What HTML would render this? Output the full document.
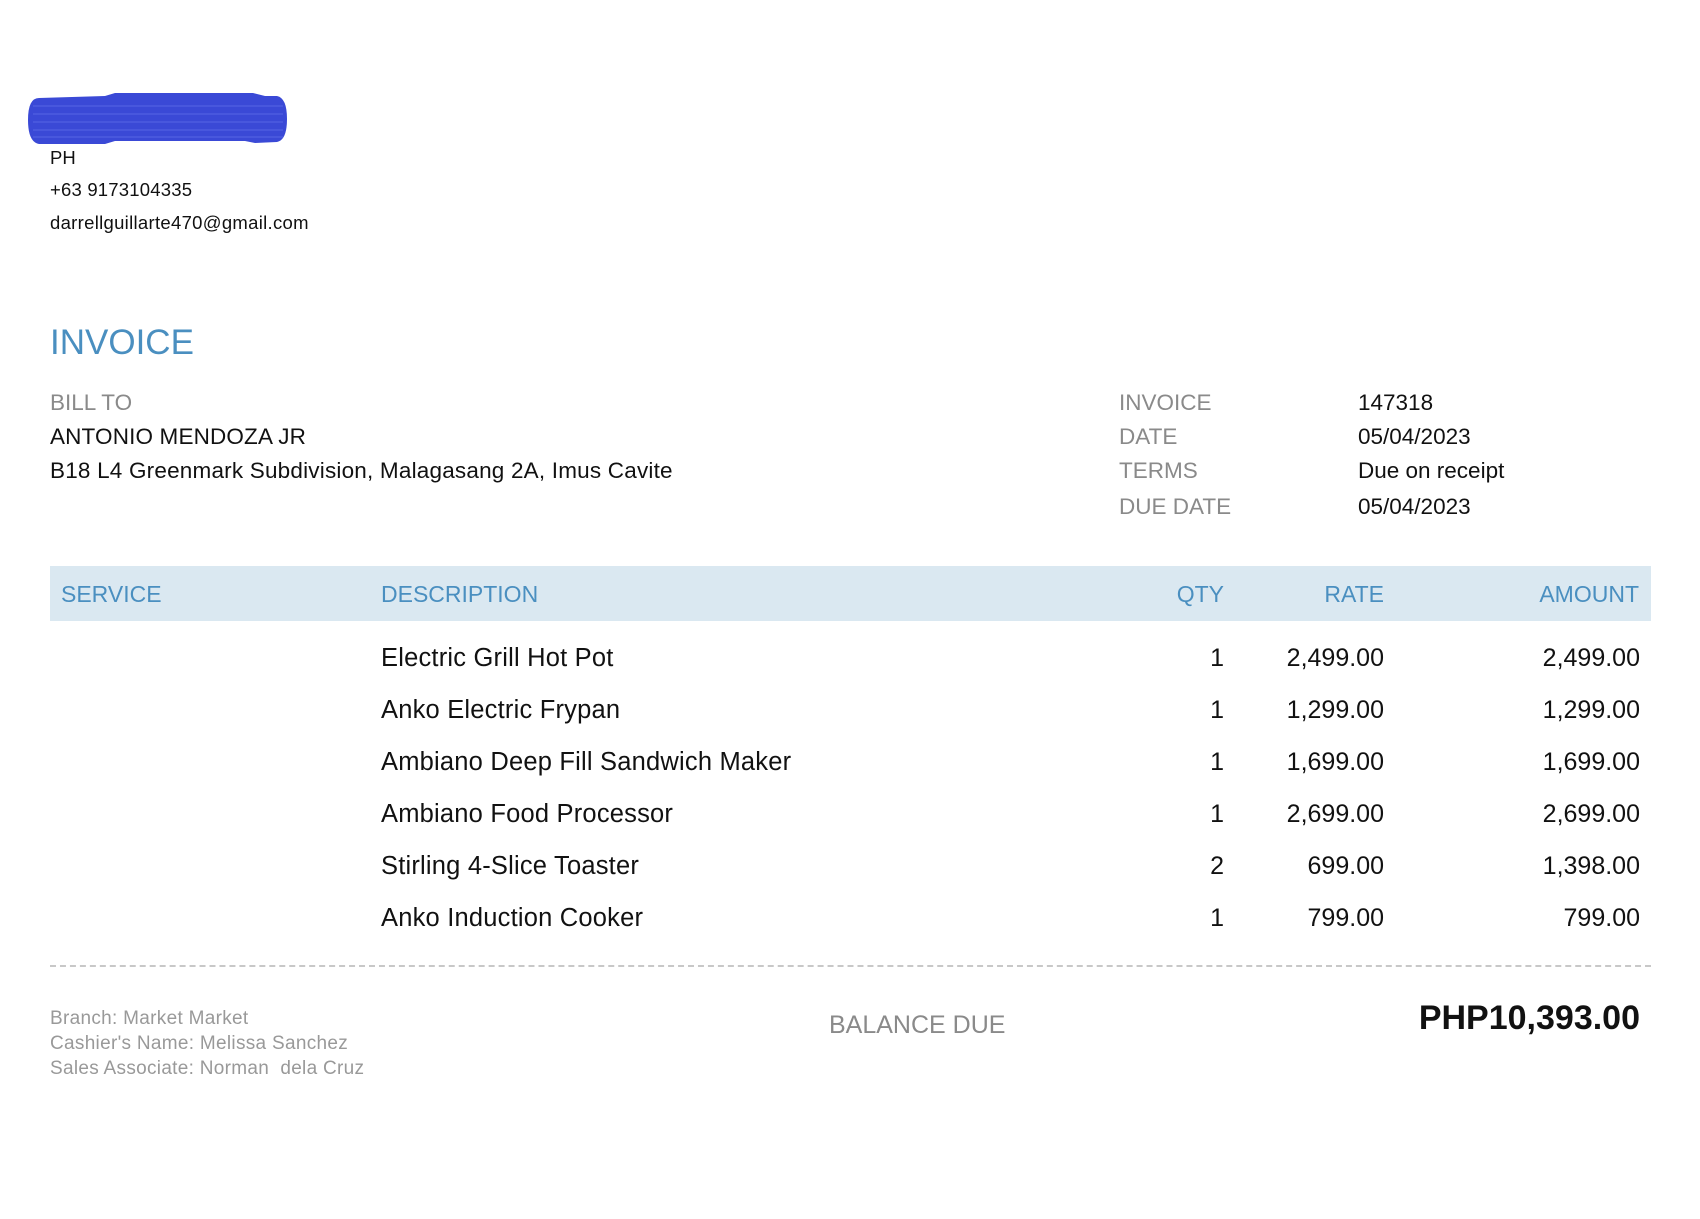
<!DOCTYPE html>
<html><head><meta charset="utf-8"><style>
body{margin:0;width:1700px;height:1219px;background:#fff;font-family:"Liberation Sans",sans-serif;position:relative;overflow:hidden;color:#111}
.a{position:absolute;white-space:nowrap;line-height:1}
.g{color:#8a8a8a}
.b{color:#4a8fc0}
.r{text-align:right}
</style></head><body>
<svg class="a" style="left:25px;top:92px" width="265" height="54"><path d="M14 6 L80 4 L90 1 L228 1 L240 4 L252 4 Q262 6 262 27 Q262 48 252 50 L230 51 L220 49 L90 49 L80 52 L14 52 Q3 50 3 28 Q3 6 14 6Z" fill="#3a49d6"/><g stroke="#6a78ee" stroke-width="1" opacity=".6"><line x1="8" y1="14" x2="258" y2="14"/><line x1="8" y1="22" x2="258" y2="22"/><line x1="8" y1="30" x2="258" y2="30"/><line x1="8" y1="38" x2="258" y2="38"/><line x1="8" y1="45" x2="258" y2="45"/></g></svg>
<div class="a" style="left:50px;top:149px;font-size:18.5px">PH</div>
<div class="a" style="left:50px;top:181px;font-size:18.5px;letter-spacing:.2px">+63 9173104335</div>
<div class="a" style="left:50px;top:214px;font-size:18.5px;letter-spacing:.3px">darrellguillarte470@gmail.com</div>
<div class="a b" style="left:50px;top:325px;font-size:35px">INVOICE</div>
<div class="a g" style="left:50px;top:392px;font-size:22.5px">BILL TO</div>
<div class="a" style="left:50px;top:426px;font-size:22.5px;letter-spacing:.15px">ANTONIO MENDOZA JR</div>
<div class="a" style="left:50px;top:460px;font-size:22.5px;letter-spacing:.2px">B18 L4 Greenmark Subdivision, Malagasang 2A, Imus Cavite</div>
<div class="a g" style="left:1119px;top:392px;font-size:22.5px">INVOICE</div>
<div class="a g" style="left:1119px;top:426px;font-size:22.5px">DATE</div>
<div class="a g" style="left:1119px;top:460px;font-size:22.5px">TERMS</div>
<div class="a g" style="left:1119px;top:496px;font-size:22.5px">DUE DATE</div>
<div class="a" style="left:1358px;top:392px;font-size:22.5px">147318</div>
<div class="a" style="left:1358px;top:426px;font-size:22.5px">05/04/2023</div>
<div class="a" style="left:1358px;top:460px;font-size:22.5px">Due on receipt</div>
<div class="a" style="left:1358px;top:496px;font-size:22.5px">05/04/2023</div>
<div class="a" style="left:50px;top:566px;width:1601px;height:55px;background:#dae8f1"></div>
<div class="a b" style="left:61px;top:583px;font-size:23px">SERVICE</div>
<div class="a b" style="left:381px;top:583px;font-size:23px">DESCRIPTION</div>
<div class="a b r" style="left:1124px;width:100px;top:583px;font-size:23px">QTY</div>
<div class="a b r" style="left:1234px;width:150px;top:583px;font-size:23px">RATE</div>
<div class="a b r" style="left:1439px;width:200px;top:583px;font-size:23px">AMOUNT</div>
<div class="a" style="left:381px;top:632px;font-size:25.5px;line-height:52px;letter-spacing:.2px">Electric Grill Hot Pot<br>Anko Electric Frypan<br>Ambiano Deep Fill Sandwich Maker<br>Ambiano Food Processor<br>Stirling 4-Slice Toaster<br>Anko Induction Cooker</div>
<div class="a r" style="left:1124px;width:100px;top:632px;font-size:25px;line-height:52px">1<br>1<br>1<br>1<br>2<br>1</div>
<div class="a r" style="left:1234px;width:150px;top:632px;font-size:25px;line-height:52px">2,499.00<br>1,299.00<br>1,699.00<br>2,699.00<br>699.00<br>799.00</div>
<div class="a r" style="left:1439px;width:201px;top:632px;font-size:25px;line-height:52px">2,499.00<br>1,299.00<br>1,699.00<br>2,699.00<br>1,398.00<br>799.00</div>
<div class="a" style="left:50px;top:965px;width:1601px;border-top:2px dashed #c8c8c8"></div>
<div class="a" style="left:50px;top:1006px;font-size:19px;line-height:25px;color:#999;letter-spacing:.3px">Branch: Market Market<br>Cashier's Name: Melissa Sanchez<br>Sales Associate: Norman&nbsp; dela Cruz</div>
<div class="a g" style="left:829px;top:1013px;font-size:25px">BALANCE DUE</div>
<div class="a r" style="left:1240px;width:400px;top:1001px;font-size:34px;font-weight:bold">PHP10,393.00</div>
</body></html>
